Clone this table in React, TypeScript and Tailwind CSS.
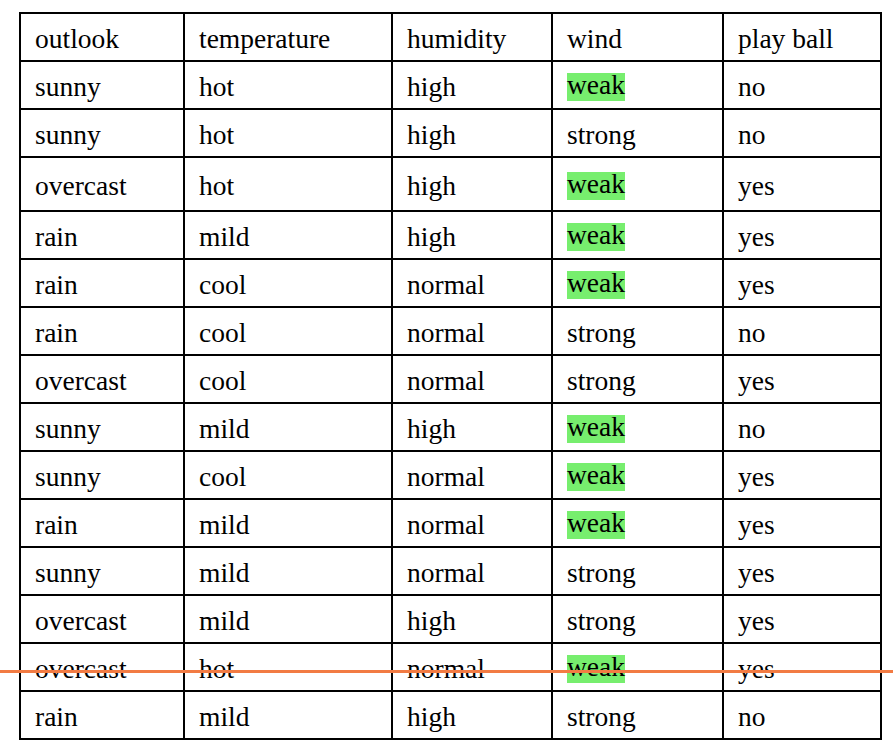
import React from 'react';

type Row = [string, string, string, string, string];

const header: Row = ['outlook', 'temperature', 'humidity', 'wind', 'play ball'];

const rows: Row[] = [
  ['sunny', 'hot', 'high', 'weak', 'no'],
  ['sunny', 'hot', 'high', 'strong', 'no'],
  ['overcast', 'hot', 'high', 'weak', 'yes'],
  ['rain', 'mild', 'high', 'weak', 'yes'],
  ['rain', 'cool', 'normal', 'weak', 'yes'],
  ['rain', 'cool', 'normal', 'strong', 'no'],
  ['overcast', 'cool', 'normal', 'strong', 'yes'],
  ['sunny', 'mild', 'high', 'weak', 'no'],
  ['sunny', 'cool', 'normal', 'weak', 'yes'],
  ['rain', 'mild', 'normal', 'weak', 'yes'],
  ['sunny', 'mild', 'normal', 'strong', 'yes'],
  ['overcast', 'mild', 'high', 'strong', 'yes'],
  ['overcast', 'hot', 'normal', 'weak', 'yes'],
  ['rain', 'mild', 'high', 'strong', 'no'],
];

const widths = ['w-[164px]', 'w-[208px]', 'w-[160px]', 'w-[171px]', 'w-[158px]'];

const Cell: React.FC<{ text: string; col: number; tall?: boolean }> = ({ text, col, tall }) => (
  <div
    className={`${widths[col]} ${tall ? 'h-[52px]' : 'h-[46px]'} flex shrink-0 items-center border-r-2 border-black pl-[14px] pt-[4px] last:border-r-0`}
  >
    {col === 3 && text === 'weak' ? (
      <span className="inline-block h-[28px] bg-[#77ee6e] font-[family-name:Liberation_Serif,Times_New_Roman,serif] text-[27.5px] leading-[23.4px] text-black">
        {text}
      </span>
    ) : (
      <span className="font-[family-name:Liberation_Serif,Times_New_Roman,serif] text-[27.5px] leading-[23.4px] text-black">
        {text}
      </span>
    )}
  </div>
);

export default function App() {
  return (
    <div className="relative h-[749px] w-[893px] overflow-hidden bg-white font-[family-name:Liberation_Serif,Times_New_Roman,serif] text-[27.5px] text-black">
      <div className="pl-[19px] pt-[12px]">
        <div className="flex w-[863px] flex-col border-2 border-black">
          {[header, ...rows].map((r, ri) => (
            <div key={ri} className="flex border-b-2 border-black last:border-b-0">
              {r.map((c, ci) => (
                <Cell key={ci} text={c} col={ci} tall={ri === 3} />
              ))}
            </div>
          ))}
        </div>
      </div>
      {/* orange line drawn across the page */}
      <div className="absolute left-0 right-0 top-[670px] h-[3px] bg-[#f27b43]" />
    </div>
  );
}
